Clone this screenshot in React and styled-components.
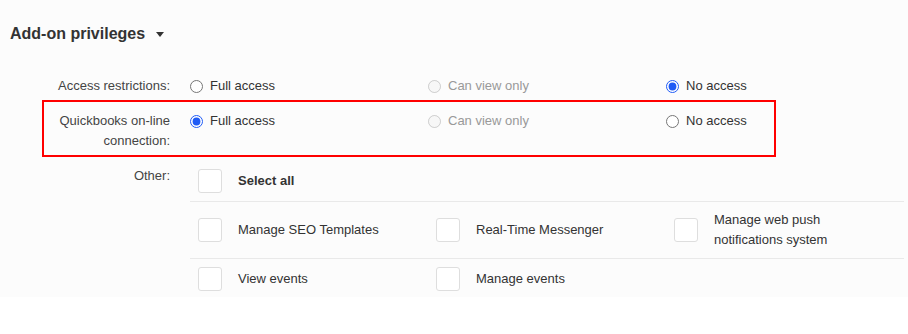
import React from 'react';
import styled, { createGlobalStyle } from 'styled-components';

const GlobalStyle = createGlobalStyle`
  html, body {
    margin: 0;
    padding: 0;
    background: #ffffff;
  }
  body {
    font-family: "Liberation Sans", Arial, sans-serif;
    font-size: 13px;
    color: #333;
  }
`;

const Panel = styled.section`
  background: #fcfcfc;
  padding: 0 13px 0 0;
  height: 297px;
  box-sizing: border-box;
`;

const Header = styled.h2`
  margin: 0;
  padding: 24px 0 0 10px;
  height: 76px;
  box-sizing: border-box;
  display: flex;
  align-items: flex-start;
  font-size: 16px;
  line-height: 20px;
  font-weight: bold;
  color: #333;
`;

const Caret = styled.span`
  display: inline-block;
  margin: 8px 0 0 11px;
  width: 0;
  height: 0;
  border-left: 4.5px solid transparent;
  border-right: 4.5px solid transparent;
  border-top: 5px solid #333;
`;

const Row = styled.div`
  display: flex;
  align-items: flex-start;
  line-height: 20px;
  margin-top: ${p => p.$mt || 0}px;
`;

const Highlight = styled.div`
  margin: 4px 0 0 42px;
  width: 734px;
  box-sizing: border-box;
  border: 2px solid #ff0000;
  padding: 9px 0 4px;
`;

const Label = styled.div`
  width: ${p => p.$width}px;
  flex-shrink: 0;
  text-align: right;
  color: #444;
  padding-top: ${p => p.$pt || 0}px;
  margin-right: 20px;
`;

const Options = styled.div`
  display: flex;
`;

const Option = styled.label`
  width: 238px;
  display: flex;
  align-items: center;
  gap: 7px;
  color: ${p => (p.$disabled ? '#999' : '#333')};
`;

const Radio = styled.input.attrs({ type: 'radio' })`
  margin: 1px 0 0;
  width: 13px;
  height: 13px;
  accent-color: #1f5bf5;
`;

const CheckGrid = styled.div`
  flex: 1;
`;

const CheckRow = styled.div`
  display: flex;
  align-items: center;
  padding: 8px 0;
  border-bottom: ${p => (p.$last ? 'none' : '1px solid #e9e9e9')};
`;

const CheckItem = styled.label`
  width: 238px;
  display: flex;
  align-items: center;
  padding-left: 8px;
  box-sizing: border-box;
`;

const Box = styled.span`
  width: 24px;
  height: 24px;
  flex-shrink: 0;
  box-sizing: border-box;
  border: 1px solid #dedede;
  border-radius: 3px;
  background: #fff;
  margin-right: 16px;
`;

const CheckText = styled.span`
  max-width: 160px;
  color: #333;
  font-weight: ${p => (p.$bold ? 'bold' : 'normal')};
`;

const access = ['Full access', 'Can view only', 'No access'];

function RadioSet({ name, checked }) {
  return (
    <Options>
      {access.map((a, i) => (
        <Option key={a} $disabled={i === 1}>
          <Radio name={name} disabled={i === 1} defaultChecked={i === checked} />
          {a}
        </Option>
      ))}
    </Options>
  );
}

function Check({ text, bold }) {
  return (
    <CheckItem>
      <Box />
      <CheckText $bold={bold}>{text}</CheckText>
    </CheckItem>
  );
}

export default function App() {
  return (
    <>
      <GlobalStyle />
      <Panel>
        <Header>
          Add-on privileges
          <Caret />
        </Header>
        <Row>
          <Label $width={170}>Access restrictions:</Label>
          <RadioSet name="access" checked={2} />
        </Row>
        <Highlight>
          <Row>
            <Label $width={126}>
              Quickbooks on-line
              <br />
              connection:
            </Label>
            <RadioSet name="qb" checked={0} />
          </Row>
        </Highlight>
        <Row $mt={4}>
          <Label $width={170} $pt={5}>Other:</Label>
          <CheckGrid>
            <CheckRow>
              <Check text="Select all" bold />
            </CheckRow>
            <CheckRow>
              <Check text="Manage SEO Templates" />
              <Check text="Real-Time Messenger" />
              <Check text="Manage web push notifications system" />
            </CheckRow>
            <CheckRow $last>
              <Check text="View events" />
              <Check text="Manage events" />
            </CheckRow>
          </CheckGrid>
        </Row>
      </Panel>
    </>
  );
}
